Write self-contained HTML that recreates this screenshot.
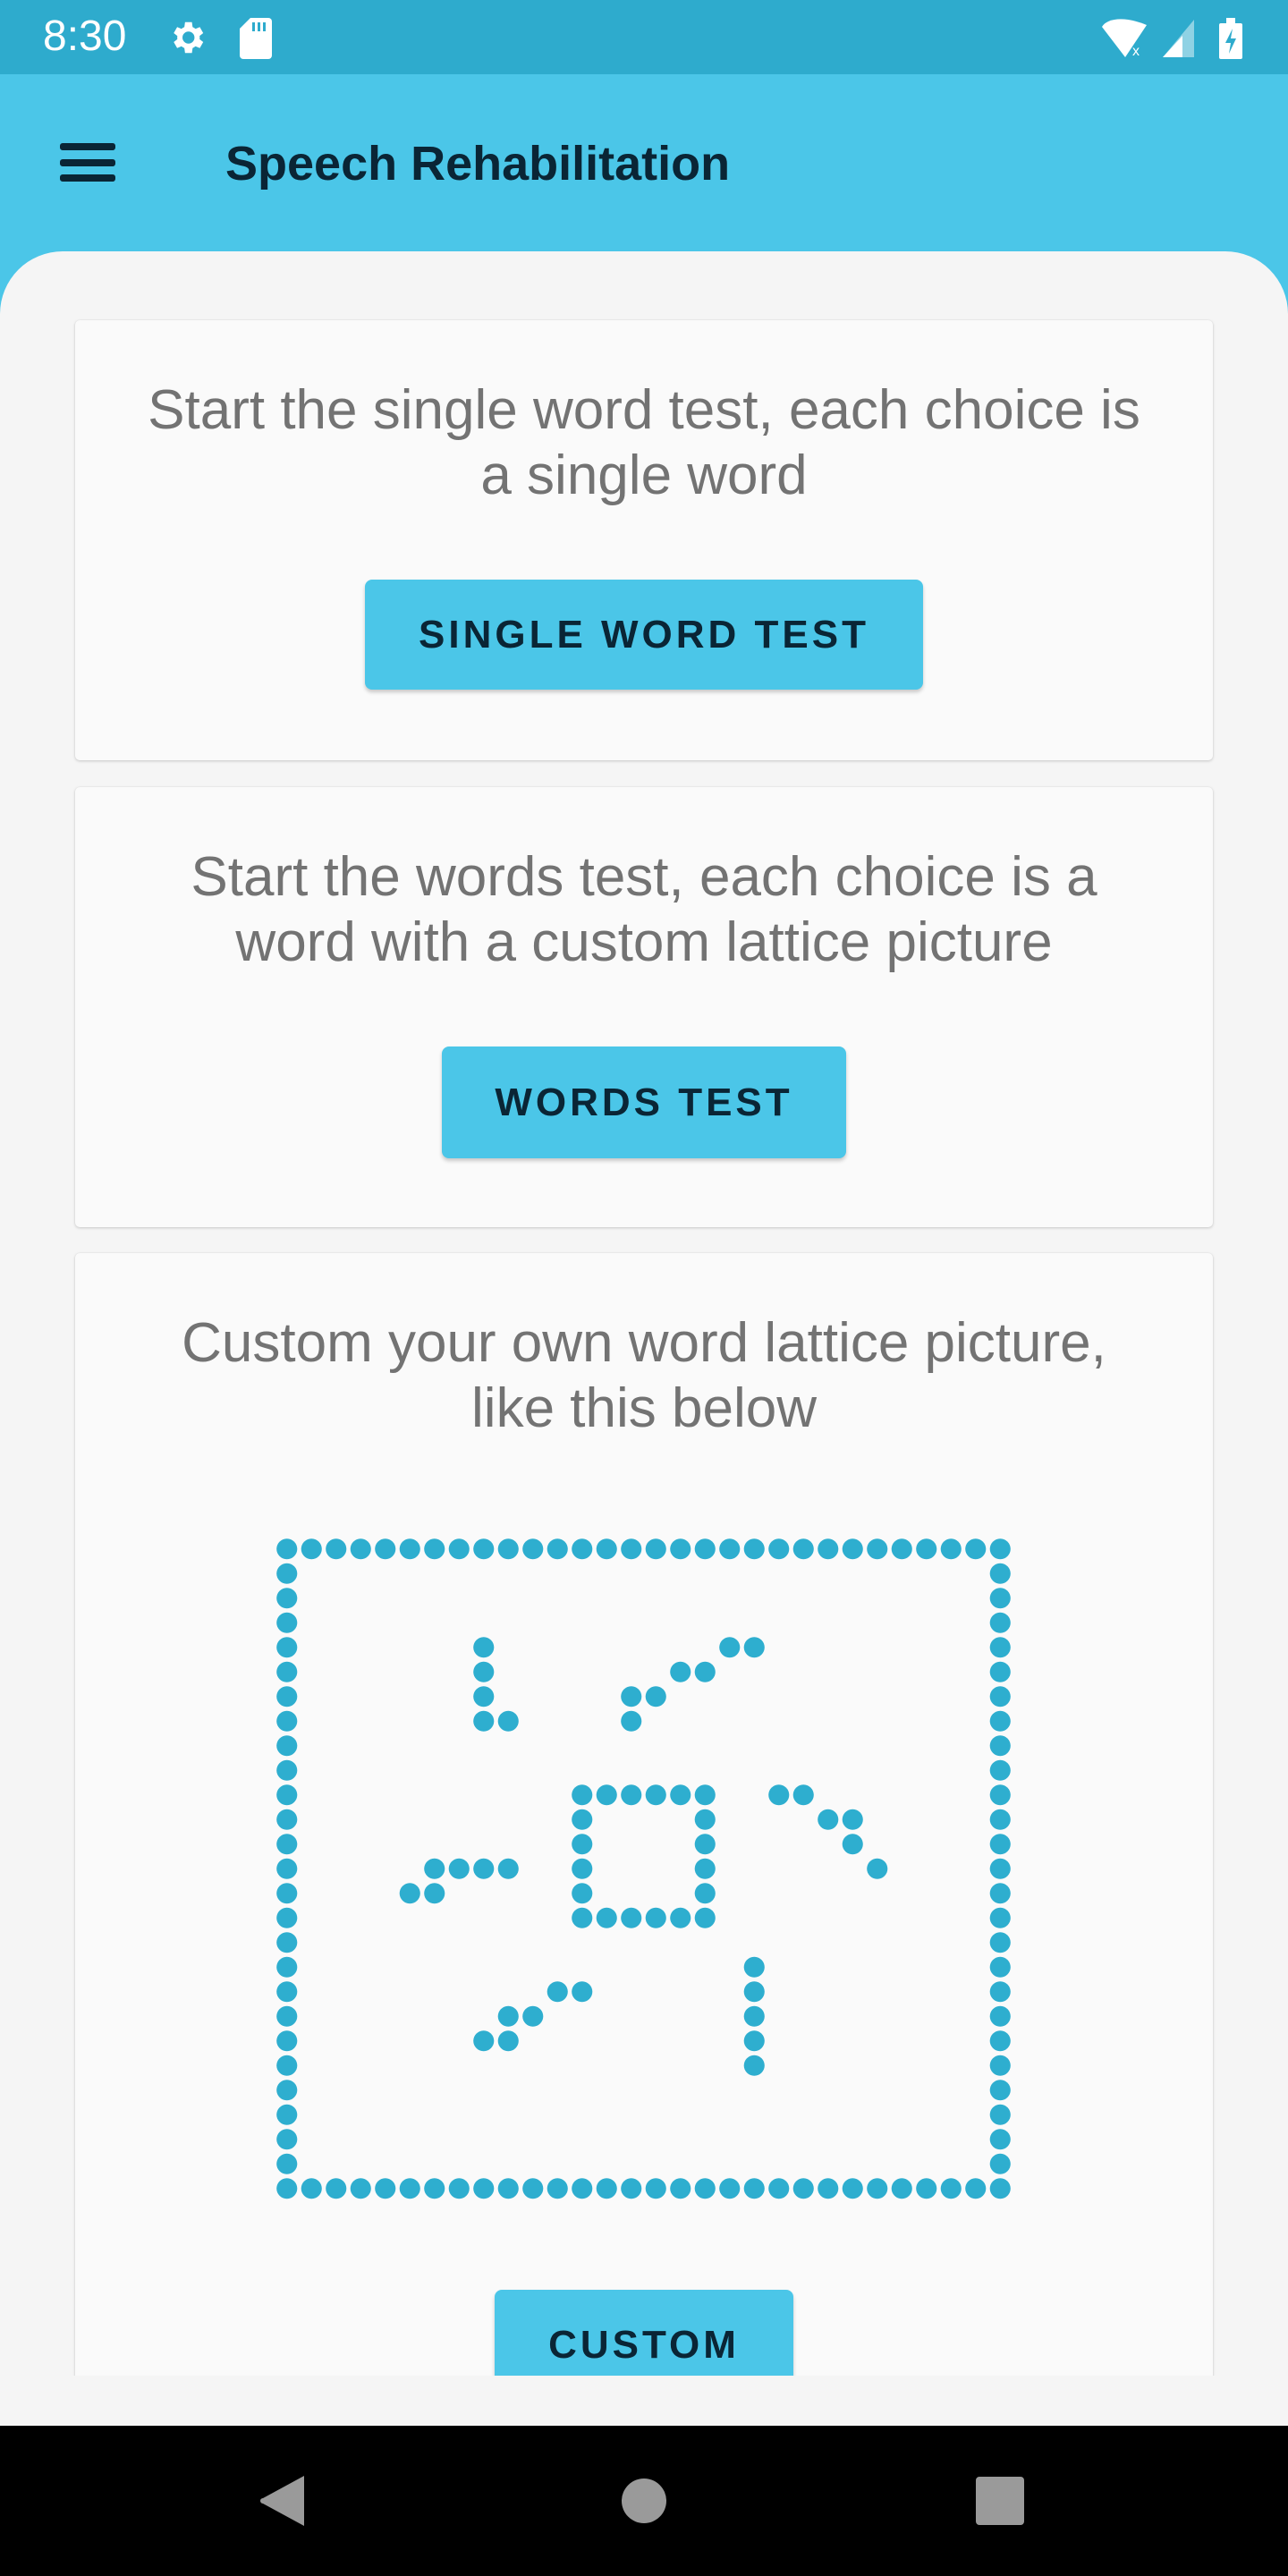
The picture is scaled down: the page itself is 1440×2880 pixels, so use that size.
<!DOCTYPE html>
<html><head><meta charset="utf-8"><style>
*{margin:0;padding:0;box-sizing:border-box}
body{width:1440px;height:2880px;position:relative;overflow:hidden;background:#4bc6e8;font-family:"Liberation Sans",sans-serif}
.abs{position:absolute}
#status{left:0;top:0;width:1440px;height:83px;background:#2eabcd}
#content{left:0;top:281px;width:1440px;height:2431px;background:#f5f5f5;border-radius:70px 70px 0 0;overflow:hidden}
#clip{left:0;top:0;width:1440px;height:2375px;overflow:hidden}
.card{position:absolute;left:84px;width:1272px;background:#fafafa;border-radius:5px;box-shadow:0 1px 3px rgba(0,0,0,.18),0 0 1px rgba(0,0,0,.12)}
.txt{position:absolute;left:0;width:100%;text-align:center;color:#737373;font-size:62px;line-height:73px;white-space:nowrap}
.btn{position:absolute;background:#4bc6e8;border-radius:8px;box-shadow:0 3px 4px rgba(0,0,0,.2);color:#0a2535;font-weight:bold;font-size:44px;letter-spacing:4px;text-align:center}
#nav{left:0;top:2712px;width:1440px;height:168px;background:#000}
</style></head><body>
<div class="abs" id="status">
 <div class="abs" style="left:48px;top:13px;color:#fff;font-size:48px;line-height:56px">8:30</div>
 <svg class="abs" style="left:186px;top:19px" width="46" height="46" viewBox="0 0 24 24"><path fill="#fff" d="M19.4 13a7.5 7.5 0 000-2l2.1-1.6-2-3.5-2.5 1a7 7 0 00-1.7-1L14.9 3h-4l-.4 2.9a7 7 0 00-1.7 1l-2.5-1-2 3.5L6.4 11a7.5 7.5 0 000 2l-2.1 1.6 2 3.5 2.5-1a7 7 0 001.7 1l.4 2.9h4l.4-2.9a7 7 0 001.7-1l2.5 1 2-3.5zM12.9 15.5a3.5 3.5 0 110-7 3.5 3.5 0 010 7z"/></svg>
 <svg class="abs" style="left:268px;top:20px" width="36" height="46" viewBox="0 0 36 46"><path fill="#fff" d="M12 0H32a4 4 0 014 4V42a4 4 0 01-4 4H4a4 4 0 01-4-4V12z"/><rect x="14" y="5" width="3" height="10" fill="#2eabcd"/><rect x="20" y="5" width="3" height="10" fill="#2eabcd"/><rect x="26" y="5" width="3" height="10" fill="#2eabcd"/></svg>
 <svg class="abs" style="left:1230px;top:20px" width="160" height="46" viewBox="0 0 160 46"><path fill="#fff" d="M2 10C8 0 28-2 52 8L28 44z"/><text x="36" y="42" fill="#fff" font-size="16" font-family="Liberation Sans">x</text><path fill="#8fd2e4" d="M105 2V44H70z"/><path fill="#fff" d="M92 20V44H70z"/><rect x="133" y="6" width="26" height="40" rx="2" fill="#fff"/><rect x="141" y="0" width="10" height="6" fill="#fff"/><path fill="#2eabcd" d="M148 12l-8 16h6l-2 12 8-17h-6z"/></svg>
</div>
<div class="abs" style="left:67px;top:160px;width:62px;height:8px;background:#0a2535;border-radius:3px"></div>
<div class="abs" style="left:67px;top:178px;width:62px;height:8px;background:#0a2535;border-radius:3px"></div>
<div class="abs" style="left:67px;top:195px;width:62px;height:8px;background:#0a2535;border-radius:3px"></div>
<div class="abs" style="left:252px;top:151px;color:#0a2535;font-size:54px;font-weight:bold;line-height:64px">Speech Rehabilitation</div>

<div class="abs" id="content"><div class="abs" id="clip">
 <div class="card" style="top:77px;height:492px">
  <div class="txt" style="top:64px">Start the single word test, each choice is<br>a single word</div>
  <div class="btn" style="left:324px;top:290px;width:624px;height:123px;line-height:123px">SINGLE WORD TEST</div>
 </div>
 <div class="card" style="top:599px;height:492px">
  <div class="txt" style="top:64px">Start the words test, each choice is a<br>word with a custom lattice picture</div>
  <div class="btn" style="left:410px;top:290px;width:452px;height:125px;line-height:125px">WORDS TEST</div>
 </div>
 <div class="card" style="top:1120px;height:1400px">
  <div class="txt" style="top:64px">Custom your own word lattice picture,<br>like this below</div>
  <div class="btn" style="left:469px;top:1159px;width:334px;height:140px;line-height:124px">CUSTOM</div>
 </div>
</div></div>

<svg class="abs" style="left:307.25px;top:1718.25px" width="825" height="742.5" viewBox="0 0 30 27">
<defs><pattern id="p" patternUnits="userSpaceOnUse" width="1" height="1"><circle cx=".5" cy=".5" r=".42" fill="#2eaecf"/></pattern></defs>
<g fill="url(#p)">
<rect x="0" y="0" width="30" height="1"/><rect x="0" y="26" width="30" height="1"/><rect x="0" y="1" width="1" height="25"/><rect x="29" y="1" width="1" height="25"/>
<rect x="8" y="4" width="1" height="4"/><rect x="9" y="7" width="1" height="1"/>
<rect x="18" y="4" width="2" height="1"/><rect x="16" y="5" width="2" height="1"/><rect x="14" y="6" width="2" height="1"/><rect x="14" y="7" width="1" height="1"/>
<rect x="12" y="10" width="6" height="1"/><rect x="12" y="15" width="6" height="1"/><rect x="12" y="11" width="1" height="4"/><rect x="17" y="11" width="1" height="4"/>
<rect x="20" y="10" width="2" height="1"/><rect x="22" y="11" width="2" height="1"/><rect x="23" y="12" width="1" height="1"/><rect x="24" y="13" width="1" height="1"/>
<rect x="6" y="13" width="4" height="1"/><rect x="5" y="14" width="2" height="1"/>
<rect x="19" y="17" width="1" height="5"/>
<rect x="11" y="18" width="2" height="1"/><rect x="9" y="19" width="2" height="1"/><rect x="8" y="20" width="2" height="1"/>
</g></svg>

<div class="abs" id="nav">
 <svg class="abs" style="left:290px;top:56px" width="56" height="56" viewBox="0 0 56 56"><path fill="#9a9a9a" d="M50 0V56L4 31a3 3 0 010-6z"/></svg>
 <div class="abs" style="left:695px;top:59px;width:50px;height:50px;border-radius:50%;background:#9a9a9a"></div>
 <div class="abs" style="left:1091px;top:57px;width:54px;height:54px;border-radius:4px;background:#9a9a9a"></div>
</div>
</body></html>
